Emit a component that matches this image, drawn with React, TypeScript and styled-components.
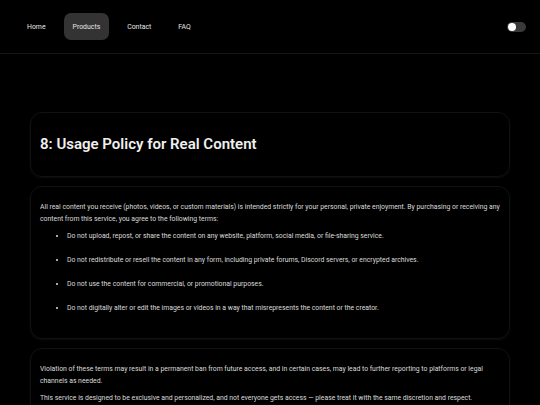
import React from 'react';
import styled, { createGlobalStyle } from 'styled-components';

const GlobalStyle = createGlobalStyle`
  html, body {
    margin: 0;
    padding: 0;
    background: #000;
    color: #ddd;
    font-family: Roboto, "Liberation Sans", Arial, sans-serif;
    -webkit-font-smoothing: antialiased;
  }
`;

const navItems = ['Home', 'Products', 'Contact', 'FAQ'];

const bullets = [
  'Do not upload, repost, or share the content on any website, platform, social media, or file-sharing service.',
  'Do not redistribute or resell the content in any form, including private forums, Discord servers, or encrypted archives.',
  'Do not use the content for commercial, or promotional purposes.',
  'Do not digitally alter or edit the images or videos in a way that misrepresents the content or the creator.',
];

export default function App() {
  return (
    <>
      <GlobalStyle />
      <Page>
        <NavBar>
          <NavLinks>
            {navItems.map(item => (
              <NavLink key={item} active={item === 'Products'}>
                {item}
              </NavLink>
            ))}
          </NavLinks>
          <Toggle>
            <Knob />
          </Toggle>
        </NavBar>
        <Main>
          <Card pad="title">
            <Title>8: Usage Policy for Real Content</Title>
          </Card>
          <Card pad="body">
            <Para>
              All real content you receive (photos, videos, or custom materials) is intended strictly for
              your personal, private enjoyment. By purchasing or receiving any content from this service,
              you agree to the following terms:
            </Para>
            <List>
              {bullets.map(b => (
                <Item key={b}>{b}</Item>
              ))}
            </List>
          </Card>
          <Card pad="body">
            <Para>
              Violation of these terms may result in a permanent ban from future access, and in certain
              cases, may lead to further reporting to platforms or legal channels as needed.
            </Para>
            <Para>
              This service is designed to be exclusive and personalized, and not everyone gets access —
              please treat it with the same discretion and respect.
            </Para>
          </Card>
        </Main>
      </Page>
    </>
  );
}

const Page = styled.div`
  min-height: 405px;
  background: #000;
`;

const NavBar = styled.nav`
  height: 54px;
  box-sizing: border-box;
  border-bottom: 1px solid #161616;
  display: flex;
  align-items: center;
  justify-content: space-between;
  padding: 0 14px 0 18px;
`;

const NavLinks = styled.div`
  display: flex;
  gap: 9px;
`;

const NavLink = styled.a<{ active?: boolean }>`
  display: flex;
  align-items: center;
  height: 27px;
  padding: 0 9px;
  border-radius: 7px;
  font-size: 6.9px;
  color: #e6e6e6;
  background: ${p => (p.active ? '#333' : 'transparent')};
  box-shadow: ${p => (p.active ? '0 1px 3px rgba(0,0,0,0.6)' : 'none')};
  cursor: pointer;
`;

const Toggle = styled.div`
  width: 19px;
  height: 10px;
  border-radius: 5px;
  background: #3a3a3a;
  display: flex;
  align-items: center;
  padding: 0 1px;
  box-sizing: border-box;
`;

const Knob = styled.div`
  width: 8px;
  height: 8px;
  border-radius: 50%;
  background: #fff;
`;

const Main = styled.main`
  padding: 58px 30px 0;
  display: flex;
  flex-direction: column;
  gap: 9px;
`;

const Card = styled.section<{ pad: 'title' | 'body' }>`
  border: 1px solid #111;
  border-radius: 12px;
  box-shadow: 0 1px 2px rgba(255, 255, 255, 0.05);
  padding: ${p => (p.pad === 'title' ? '20px 9px 21px' : '14px 9px 24px')};
`;

const Title = styled.h1`
  margin: 0;
  font-size: 15px;
  line-height: 22px;
  font-weight: 600;
  color: #f0f0f0;
`;

const Para = styled.p`
  margin: 0 0 5px;
  font-size: 6.85px;
  line-height: 12px;
  color: #dcdcdc;
`;

const List = styled.ul`
  margin: 2px 0 0;
  padding: 0 0 0 27px;
  display: flex;
  flex-direction: column;
  gap: 12px;
`;

const Item = styled.li`
  font-size: 6.85px;
  line-height: 12px;
  color: #dcdcdc;
`;
